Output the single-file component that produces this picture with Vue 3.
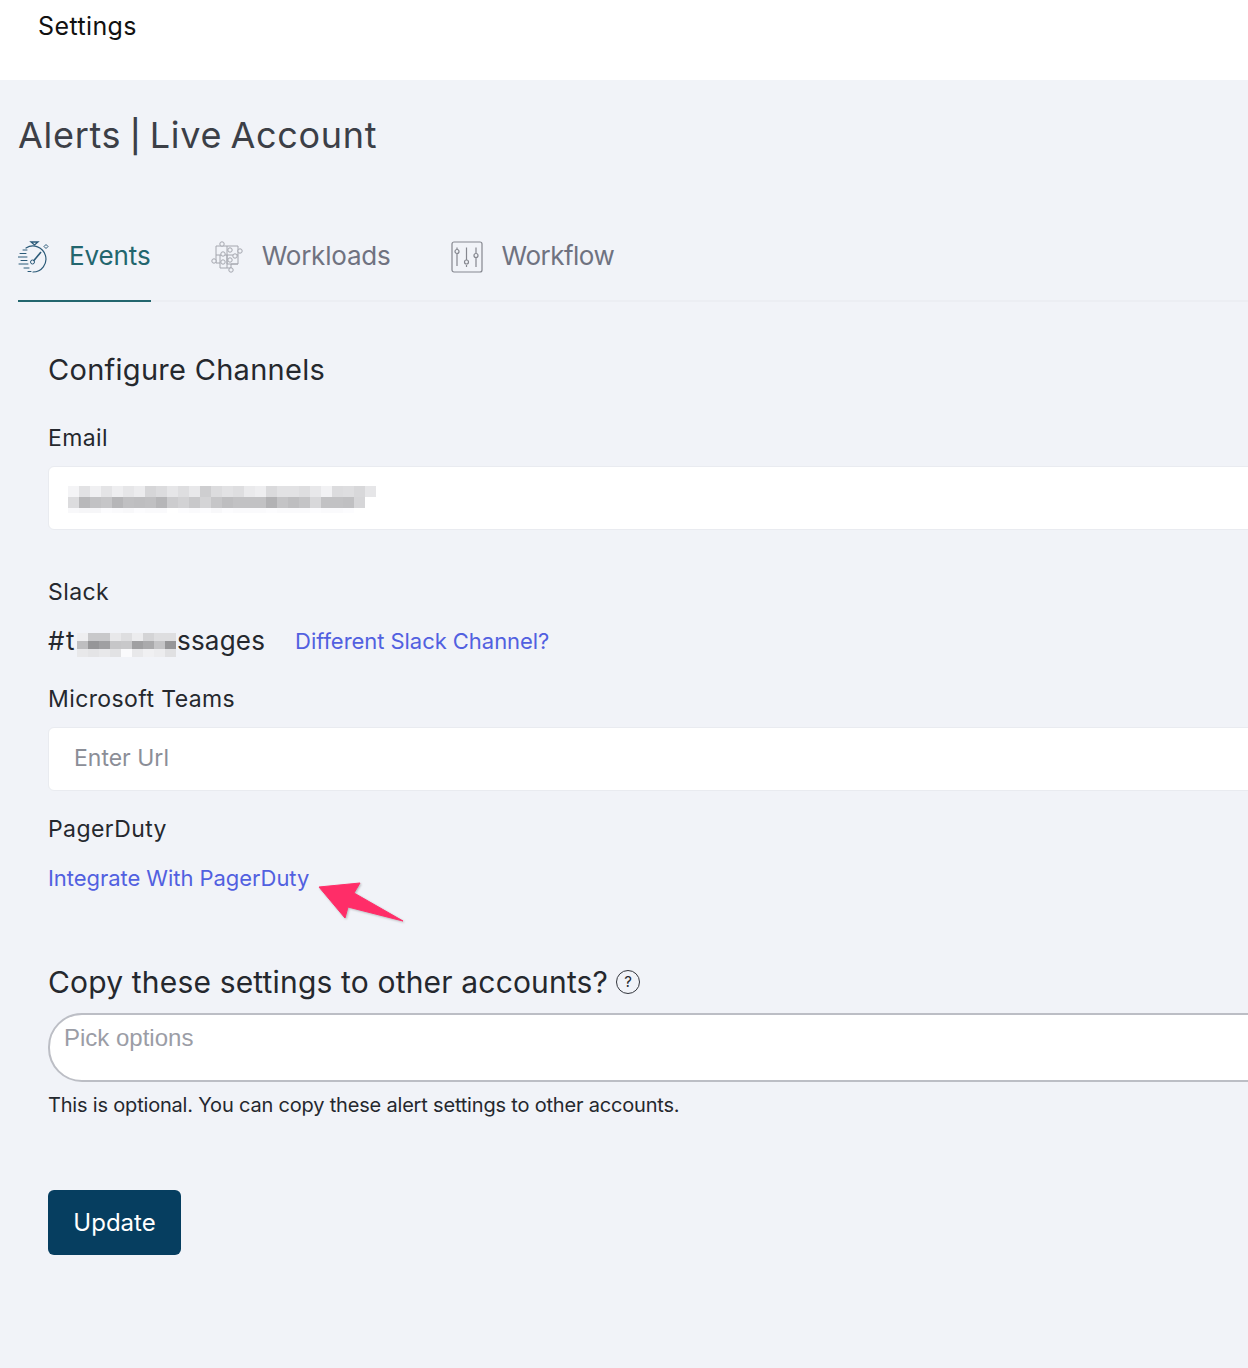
<script setup>
const emailBlur = [
  [244,226,240,228,238,230,236,214,220,230,222,232,206,220,226,222,234,238,218,226,226,222,232,242,220,222,216,230],
  [220,184,194,198,182,192,190,192,182,204,210,200,212,198,190,194,194,194,178,196,190,196,216,194,194,192,214,255],
  [248,246,246,252,250,248,252,250,250,255,252,250,252,248,252,250,250,250,252,250,250,250,252,250,250,252,255,255]
]
const slackBlur = [
  [238,200,200,232,222,236,212,222,222],
  [190,150,160,198,200,160,170,196,150],
  [232,228,232,226,250,232,240,236,224]
]
const grey = v => `rgb(${v},${v},${v + 2})`
const puzzleKnobs = [[11,3],[29,10],[3,20],[20,29],[12,13],[19,9],[19,19],[12,21],[24,15]]
</script>

<template>
  <div class="page">
    <header class="topbar"><span class="topbar-title">Settings</span></header>
    <main class="content">
      <h1 class="page-title">Alerts <span class="pipe">|</span> Live Account</h1>

      <nav class="tabs">
        <a class="tab active">
          <svg class="tab-icon" viewBox="0 0 32 32" fill="none" stroke="#2b5a78" stroke-width="1">
            <path d="M13 1h7l-3.500 3z" stroke-width="1.300"/>
            <path d="M8 7A13 13 0 1 1 15 31" stroke-width="1.200" stroke-linecap="round"/>
            <path d="M13 30.500h-3M6 27h5M1 23h9M3 19.500h6M0 16h9M2 12.500h6M5 9h4" stroke-linecap="round"/>
            <path d="M15.500 20 23 11" stroke-width="1.600"/>
            <circle cx="14.500" cy="21" r="2"/>
            <path d="m26 5.500 2-2 2 2-2 2z"/>
          </svg>
          <span>Events</span>
        </a>
        <a class="tab">
          <svg class="tab-icon" viewBox="0 0 32 32" fill="none" stroke="#a4a6ae" stroke-width="1">
            <path d="M5 5h22v18h-7v4H9v-5H5z"/>
            <path d="M5 14h11v13M16 5v18h11M9 14v8M16 14h11"/>
            <circle v-for="(k, i) in puzzleKnobs" :key="i" :cx="k[0]" :cy="k[1]" r="2.200" fill="#f1f3f8"/>
          </svg>
          <span>Workloads</span>
        </a>
        <a class="tab">
          <svg class="tab-icon" viewBox="0 0 32 32" fill="none" stroke="#85878f" stroke-width="1.200">
            <rect x="1" y="1" width="30" height="30" rx="2"/>
            <path d="M6 6.500v2M6 13v12M15.500 6.500V19M15.500 24v2M25 6.500V12M25 17v9"/>
            <circle cx="6" cy="10.500" r="2"/>
            <circle cx="15.500" cy="21" r="2"/>
            <circle cx="25" cy="14.500" r="2"/>
          </svg>
          <span>Workflow</span>
        </a>
      </nav>

      <section class="form">
        <h2 class="section-title">Configure Channels</h2>

        <label class="label email-label">Email</label>
        <div class="input">
          <div class="blur email-blur">
            <div v-for="(row, r) in emailBlur" :key="r" class="blur-row">
              <i v-for="(v, c) in row" :key="c" :style="{ background: grey(v) }"></i>
            </div>
          </div>
        </div>

        <label class="label slack-label">Slack</label>
        <div class="slack-row">
          <span class="slack-name">
            <span class="slack-head">#t</span><span class="blur slack-blur">
              <span v-for="(row, r) in slackBlur" :key="r" class="blur-row">
                <i v-for="(v, c) in row" :key="c" :style="{ background: grey(v) }"></i>
              </span>
            </span><span class="slack-tail">ssages</span>
          </span>
          <a class="link">Different Slack Channel?</a>
        </div>

        <label class="label teams-label">Microsoft Teams</label>
        <div class="input"><span class="placeholder">Enter Url</span></div>

        <label class="label duty-label">PagerDuty</label>
        <div class="duty-row">
          <a class="link">Integrate With PagerDuty</a>
          <svg class="arrow" viewBox="0 0 90 44">
            <path d="M1 7 42 3 36 13 85 41 30 27 27 38z" fill="#ff2d68" stroke="#ff2d68" stroke-linejoin="round"/>
          </svg>
        </div>

        <div class="copy-head">
          <h2 class="copy-title">Copy these settings to other accounts?</h2>
          <span class="help">?</span>
        </div>
        <div class="select"><span>Pick options</span></div>
        <p class="hint">This is optional. You can copy these alert settings to other accounts.</p>

        <button class="update" type="button">Update</button>
      </section>
    </main>
  </div>
</template>

<style>
html, body { margin: 0; overflow: hidden; background: #f1f3f8; }
</style>

<style scoped>
.page {
  width: 1248px;
  height: 1368px;
  overflow: hidden;
  background: #f1f3f8;
  font-family: Inter, "Noto Sans", sans-serif;
  color: #25282e;
}
.topbar {
  height: 80px;
  background: #fff;
  padding-left: 38px;
  box-sizing: border-box;
}
.topbar-title {
  display: block;
  font-size: 25px;
  line-height: 53px;
  color: #111;
  letter-spacing: 0.4px;
}
.content { padding-left: 18px; }
.page-title {
  margin: 0;
  padding-top: 31px;
  font-size: 36px;
  line-height: 48px;
  font-weight: 400;
  color: #3c3f47;
  letter-spacing: 0.7px;
  word-spacing: -2.500px;
}
.pipe { font-size: 32px; font-weight: 500; }
.tabs {
  display: flex;
  gap: 60px;
  margin-top: 76px;
  height: 63px;
  width: 1400px;
  border-bottom: 2px solid #eceef3;
}
.tab {
  box-sizing: border-box;
  display: flex;
  align-items: flex-start;
  gap: 19px;
  height: 65px;
  color: #6f7280;
  font-size: 26px;
  line-height: 38px;
  letter-spacing: -0.2px;
}
.tab:last-child { letter-spacing: -0.5px; }
.tab.active {
  color: #23666e;
  border-bottom: 2px solid #23666e;
  letter-spacing: -0.1px;
}
.tab-icon { width: 32px; height: 32px; flex: none; margin-top: 4px; }
.form { padding-left: 30px; padding-top: 49px; }
.section-title {
  margin: 0;
  font-size: 29px;
  line-height: 38px;
  font-weight: 400;
  letter-spacing: 0.28px;
}
.label { display: block; font-size: 23px; line-height: 30px; letter-spacing: 0.4px; }
.email-label { margin-top: 34px; }
.slack-label { margin-top: 47px; }
.teams-label { margin-top: 24px; }
.duty-label { margin-top: 23px; }
.input {
  box-sizing: border-box;
  width: 1400px;
  height: 64px;
  margin-top: 13px;
  background: #fff;
  border: 1px solid #e9ebf0;
  border-radius: 6px;
  display: flex;
  align-items: center;
  padding-left: 25px;
}
.placeholder { font-size: 23px; color: #8b8e97; margin-top: -2px; }
.blur { display: block; filter: blur(0.5px); }
.blur-row { display: flex; }
.blur-row i { display: block; }
.email-blur { margin-left: -6px; margin-top: 2px; }
.email-blur .blur-row i { width: 11px; height: 11px; }
.email-blur .blur-row:last-child i { height: 5px; }
.slack-row {
  display: flex;
  align-items: center;
  gap: 30px;
  height: 38px;
  margin-top: 15px;
}
.slack-name { display: flex; align-items: center; font-size: 26px; line-height: 38px; }
.slack-head { width: 29px; letter-spacing: 1.5px; }
.slack-blur { width: 99px; margin-top: 8px; }
.slack-blur .blur-row i { width: 11px; height: 8px; }
.slack-tail { letter-spacing: 0.2px; margin-left: 1px; }
.link { color: #5160e0; font-size: 22px; line-height: 30px; letter-spacing: -0.05px; }
.duty-row { display: flex; align-items: center; height: 30px; margin-top: 19px; position: relative; }
.arrow { position: absolute; left: 270px; top: 17px; width: 90px; height: 44px; filter: drop-shadow(1px 1px 1px rgba(0,0,0,.25)); }
.copy-head { display: flex; align-items: center; gap: 8px; margin-top: 70px; height: 38px; }
.copy-title { margin: 0; font-size: 30px; line-height: 38px; font-weight: 400; letter-spacing: 0.17px; }
.help {
  box-sizing: border-box;
  width: 24px;
  height: 24px;
  border: 1.500px solid #33363d;
  border-radius: 50%;
  font-size: 15px;
  line-height: 21px;
  text-align: center;
}
.select {
  box-sizing: border-box;
  width: 1400px;
  height: 69px;
  margin-top: 12px;
  background: #fff;
  border: 2px solid #bcbec5;
  border-radius: 34px;
  padding: 7px 14px;
  font-family: "Liberation Sans", sans-serif;
  font-size: 24px;
  line-height: 32px;
  color: #9b9da6;
}
.hint { margin: 9px 0 0; font-size: 20px; line-height: 28px; color: #25282e; letter-spacing: -0.19px; }
.update {
  display: block;
  width: 133px;
  height: 65px;
  margin-top: 71px;
  background: #063e60;
  color: #fff;
  border: 0;
  border-radius: 6px;
  font-family: inherit;
  font-size: 24px;
}
</style>
